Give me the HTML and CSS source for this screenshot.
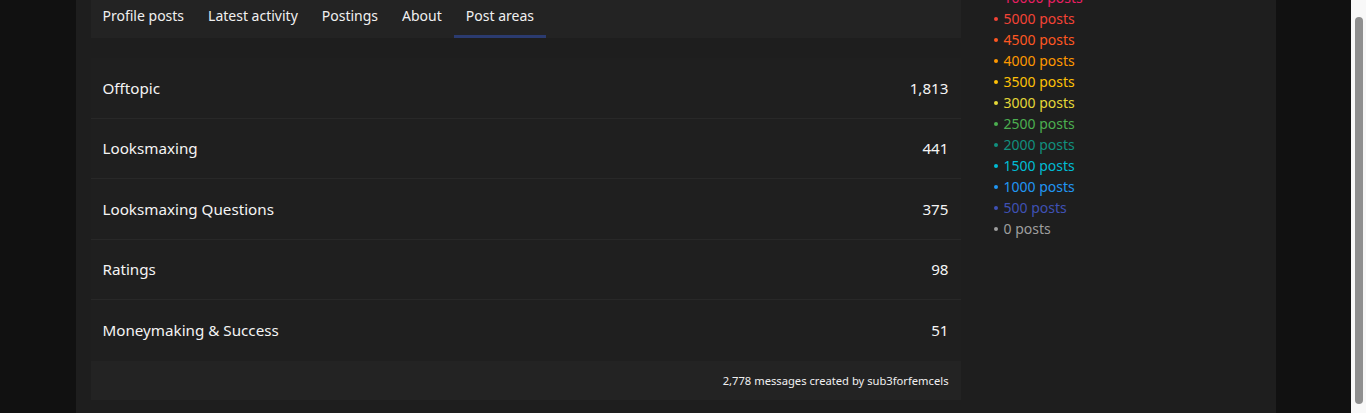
FILE: index.html
```html
<!DOCTYPE html>
<html>
<head>
<meta charset="utf-8">
<link rel="stylesheet" href="styles.css">
</head>
<body>
<div class="viewport">
  <div class="page">
    <div class="container">
      <div class="main">
        <nav class="tabs">
          <a class="tab">Profile posts</a>
          <a class="tab">Latest activity</a>
          <a class="tab">Postings</a>
          <a class="tab">About</a>
          <a class="tab active">Post areas</a>
        </nav>
        <div class="list">
          <div class="row"><span>Offtopic</span><span>1,813</span></div>
          <div class="row"><span>Looksmaxing</span><span>441</span></div>
          <div class="row"><span>Looksmaxing Questions</span><span>375</span></div>
          <div class="row"><span>Ratings</span><span>98</span></div>
          <div class="row"><span>Moneymaking &amp; Success</span><span>51</span></div>
        </div>
        <div class="foot">2,778 messages created by sub3forfemcels</div>
      </div>
      <aside class="side">
        <ul class="legend">
          <li class="c10000">10000 posts</li>
          <li class="c5000">5000 posts</li>
          <li class="c4500">4500 posts</li>
          <li class="c4000">4000 posts</li>
          <li class="c3500">3500 posts</li>
          <li class="c3000">3000 posts</li>
          <li class="c2500">2500 posts</li>
          <li class="c2000">2000 posts</li>
          <li class="c1500">1500 posts</li>
          <li class="c1000">1000 posts</li>
          <li class="c500">500 posts</li>
          <li class="c0">0 posts</li>
        </ul>
      </aside>
    </div>
  </div>
  <div class="scrollbar"><div class="thumb"></div></div>
</div>
</body>
</html>
```
FILE: styles.css
```css
* { box-sizing: border-box; }
html, body { margin: 0; padding: 0; height: 100%; overflow: hidden; }
body {
  background: #111111;
  font-family: "Noto Sans", "Open Sans", sans-serif;
  color: #f2f2f2;
}
.viewport { display: flex; height: 413px; }
.page { flex: 1; display: flex; justify-content: center; background: #111111; }
.container {
  width: 1200px;
  background: #1e1e1e;
  padding: 0 0 0 15px;
  display: flex;
}
.main { width: 870px; display: flex; flex-direction: column; }
.tabs {
  display: flex;
  height: 38px;
  background: #232323;
  padding-left: 0;
}
.tab {
  padding: 0 12px;
  height: 38px;
  line-height: 32px;
  font-size: 14px;
  color: #f0f0f0;
  border-bottom: 3px solid transparent;
  white-space: nowrap;
}
.tab.active { border-bottom-color: #2b3b70; }
.list {
  margin-top: 20px;
  background: #1f1f1f;
}
.row {
  display: flex;
  justify-content: space-between;
  align-items: center;
  height: 60.5px;
  padding: 0 12px;
  font-size: 15.2px;
  color: #f4f4f4;
  border-bottom: 1px solid #282828;
}
.row:last-child { border-bottom: none; }
.foot {
  background: #232323;
  height: 39px;
  line-height: 39px;
  text-align: right;
  padding: 0 12px;
  font-size: 11.2px;
  color: #f0f0f0;
}
.side { flex: 1; padding-left: 32px; }
.legend {
  list-style: none;
  margin: -13px 0 0 0;
  padding: 0;
  font-size: 14px;
  line-height: 21px;
}
.legend li { display: flex; align-items: center; }
.legend li::before {
  content: "";
  width: 4px;
  height: 4px;
  border-radius: 50%;
  background: currentColor;
  margin: 1px 6px 0 1px;
}
.c10000 { color: #e91e63; }
.c5000 { color: #f44336; }
.c4500 { color: #ff5722; }
.c4000 { color: #ff9800; }
.c3500 { color: #ffc107; }
.c3000 { color: #e5d838; }
.c2500 { color: #4caf50; }
.c2000 { color: #11907f; }
.c1500 { color: #00bcd4; }
.c1000 { color: #2196f3; }
.c500 { color: #3f51b5; }
.c0 { color: #9e9e9e; }
.scrollbar {
  width: 15px;
  background: #f8f8f8;
  padding: 17px 3px 9px 4px;
}
.thumb {
  height: 100%;
  background: #8f8f8f;
  border-radius: 5px;
}
```
